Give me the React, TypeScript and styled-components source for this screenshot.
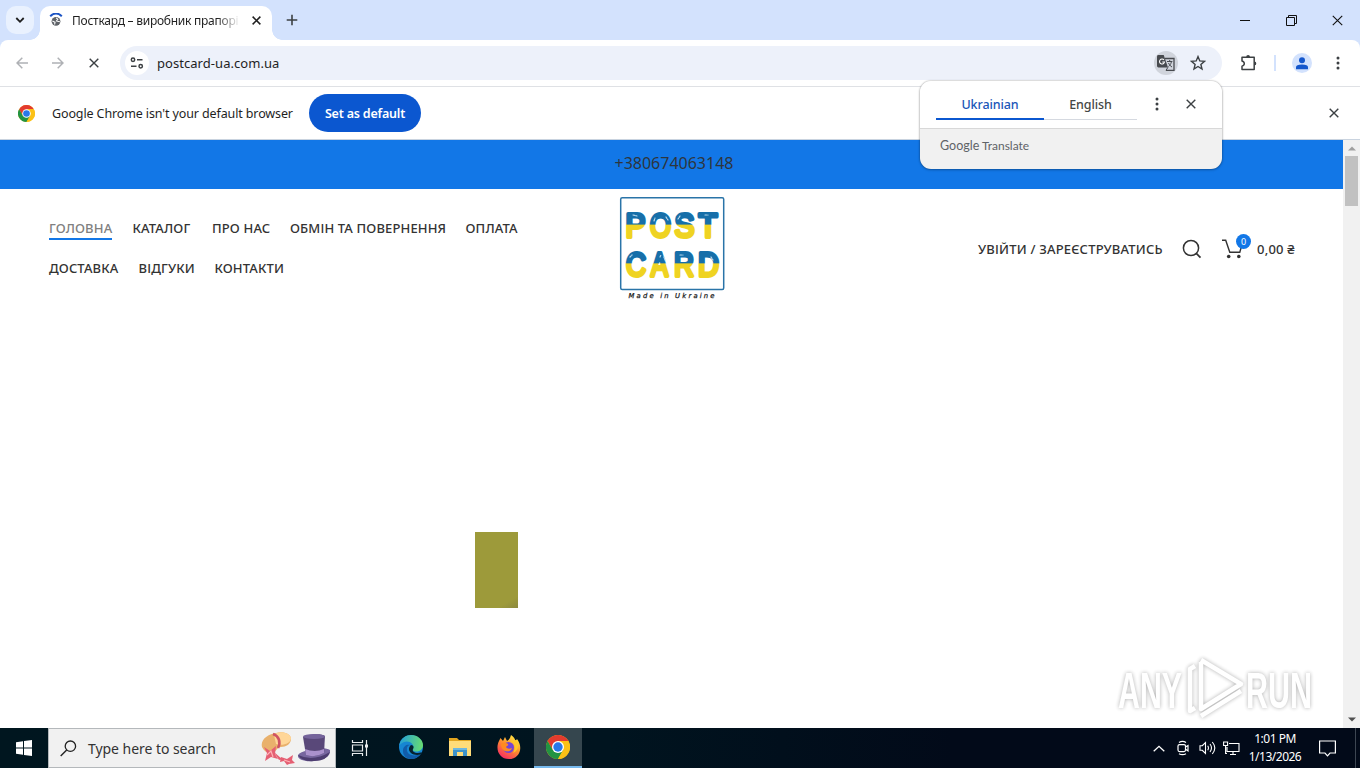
import styled, { createGlobalStyle } from 'styled-components'

const NAV_ITEMS = [
  { label: 'ГОЛОВНА', width: 63, active: true },
  { label: 'КАТАЛОГ', width: 59 },
  { label: 'ПРО НАС', width: 57.5 },
  { label: 'ОБМІН ТА ПОВЕРНЕННЯ', width: 155 },
  { label: 'ОПЛАТА', width: 54 },
  { label: 'ДОСТАВКА', width: 69 },
  { label: 'ВІДГУКИ', width: 55.5 },
  { label: 'КОНТАКТИ', width: 70 },
]

const ChromeLogo = ({ size }: { size: number }) => (
  <svg width={size} height={size} viewBox="0 0 48 48">
    <circle cx="24" cy="24" r="24" fill="#fbc116" />
    <path d="M24 12H44.8A24 24 0 0 0 3.2 12L13.6 30Z" fill="#e33b2e" />
    <path d="M3.2 12A24 24 0 0 0 24 48L34.4 30 24 34 13.6 30Z" fill="#229342" />
    <path d="M44.8 12A24 24 0 0 1 24 48L34.4 30A12 12 0 0 0 24 12Z" fill="#fbc116" />
    <circle cx="24" cy="24" r="12" fill="#fff" />
    <circle cx="24" cy="24" r="9.4" fill="#2878e8" />
  </svg>
)

const Cross = ({ size = 10, stroke = 1.4, color = '#3c4043' }) => (
  <svg width={size} height={size} viewBox="0 0 10 10">
    <path d="M.7.7 9.3 9.3M9.3.7.7 9.3" stroke={color} strokeWidth={stroke} fill="none" />
  </svg>
)

const Dots = () => (
  <svg width="4" height="14" viewBox="0 0 4 14" fill="#3c4043">
    <circle cx="2" cy="2" r="1.5" />
    <circle cx="2" cy="7" r="1.5" />
    <circle cx="2" cy="12" r="1.5" />
  </svg>
)

const Arrow = ({ flip = false }) => (
  <svg width="12" height="12" viewBox="0 0 12 12">
    <path
      d={flip ? 'M0 6h11M5.7.7 11 6l-5.3 5.3' : 'M12 6H1M6.3.7 1 6l5.3 5.3'}
      stroke="#afb1b5"
      strokeWidth="1.5"
      fill="none"
    />
  </svg>
)

const Favicon = () => (
  <svg width="14" height="15" viewBox="0 0 14 15">
    <path d="M1.2 3.3Q7-2.3 12.8 3.3" stroke="#1c54c4" strokeWidth="2" fill="none" />
    <circle cx="7" cy="8.3" r="4.4" fill="#5f6368" />
    <path d="M3.4 8 6 9.3 5.6 11.5M7.2 4.900 8.8 6.3 7.5 7.9 10.8 8.8" stroke="#fff" strokeWidth="1.1" fill="none" />
  </svg>
)

const PostcardLogo = () => (
  <svg width="106" height="106" viewBox="0 0 106 106">
    <defs>
      <linearGradient id="flagTop" gradientUnits="userSpaceOnUse" x1="0" y1="15" x2="0" y2="44">
        <stop offset=".45" stopColor="#176fa9" />
        <stop offset=".49" stopColor="#efd322" />
      </linearGradient>
      <linearGradient id="flagBottom" gradientUnits="userSpaceOnUse" x1="0" y1="54" x2="0" y2="83">
        <stop offset=".44" stopColor="#176fa9" />
        <stop offset=".48" stopColor="#efd322" />
      </linearGradient>
    </defs>
    <rect x="1.7" y="1.8" width="103" height="91.8" rx="1.5" fill="none" stroke="#2a74a8" strokeWidth="1.5" />
    <g fontFamily="Liberation Sans, Arial, sans-serif" fontSize="34" strokeWidth="3.9" strokeLinejoin="round">
      <text y="41.3" fill="url(#flagTop)" stroke="url(#flagTop)">
        <tspan x="6.5" textLength="20" lengthAdjust="spacingAndGlyphs">P</tspan>
        <tspan x="31" textLength="21" lengthAdjust="spacingAndGlyphs">O</tspan>
        <tspan x="55.5" textLength="20" lengthAdjust="spacingAndGlyphs">S</tspan>
        <tspan x="79.5" textLength="19" lengthAdjust="spacingAndGlyphs">T</tspan>
      </text>
      <text y="80" fill="url(#flagBottom)" stroke="url(#flagBottom)">
        <tspan x="7" textLength="20" lengthAdjust="spacingAndGlyphs">C</tspan>
        <tspan x="32" textLength="17" lengthAdjust="spacingAndGlyphs">A</tspan>
        <tspan x="55" textLength="20" lengthAdjust="spacingAndGlyphs">R</tspan>
        <tspan x="79" textLength="21" lengthAdjust="spacingAndGlyphs">D</tspan>
      </text>
    </g>
    <path
      d="M14 19l4 1M35 25l1-3m11-1 2 3M61 20l-2 3M86 19h3M11 61l2-2M41 61l1-2m3 2 1 3M61 59h3M92 61l2 3"
      stroke="#b9d9ec"
      strokeWidth="1.2"
      strokeDasharray="1.6 1.2"
      strokeLinecap="round"
      fill="none"
    />
    <text x="9.5" y="101.8" fontFamily="DejaVu Sans, sans-serif" fontStyle="italic" fontSize="6.8" textLength="86" fill="#222" stroke="#222" strokeWidth=".25">
      Made in Ukraine
    </text>
  </svg>
)

const Watermark = () => (
  <svg width="250" height="74" viewBox="0 0 250 74">
    <g fill="#fff" fontFamily="Liberation Sans, Arial, sans-serif" fontWeight="700" fontSize="50">
      <text x="8" y="56" textLength="64" lengthAdjust="spacingAndGlyphs">ANY</text>
      <text x="136" y="56" textLength="66" lengthAdjust="spacingAndGlyphs">RUN</text>
    </g>
    <g fill="none" stroke="#fff" strokeWidth="4.5" strokeLinejoin="round">
      <path d="M91 8 131 32 91 57V10" />
      <path d="M85 14 80 17V59L85 56M91 64 131 39" />
    </g>
  </svg>
)

const SunHat = () => (
  <svg width="34" height="34" viewBox="0 0 34 34">
    <path d="M1 16C-1 8 8 3 15 2c6-2 15 0 15 6 0 5-5 8-10 8-4 0-5 5-9 6S3 20 1 16Z" fill="#e9b16c" />
    <path d="M13 4c4-5 16-3 17 3 0 6-9 8-15 6Z" fill="#ffd698" />
    <path d="M12 3c6 2 8 8 5 14" stroke="#cf5364" strokeWidth="2.6" fill="none" />
    <path d="m3 16 6 4 6-5-1 8 3 5-7-2-6 4 2-8ZM13 21l8 7-3 1ZM20 26l6 2 6-4-1 5 3 3-6 1-2 1-3-4-4 1Z" fill="#e55f73" />
    <path d="m6 24 4-4 2 6M23 29l6 2" stroke="#ffb3b7" strokeWidth="1.2" fill="none" />
  </svg>
)

const TopHat = () => (
  <svg width="34" height="30" viewBox="0 0 34 30">
    <path d="M1 22C5 17 27 13 33 17c1 7-7 10-16 11C9 29 0 27 1 22Z" fill="#77669f" />
    <path d="M6 4C11 1 25 0 28 3L27 20Q18 25 9 22Z" fill="#594879" />
    <path d="M8 16q10 4 19 0v4q-9 5-18 2Z" fill="#aa91cc" />
    <ellipse cx="17" cy="3.5" rx="11" ry="2.4" fill="#75649b" />
    <path d="M1 22q15 7 32-3-3 9-16 9Q5 29 1 22Z" fill="#4d3d70" />
  </svg>
)

const EdgeLogo = () => (
  <svg width="24" height="24" viewBox="0 0 24 24">
    <defs>
      <linearGradient id="edgeTop" x1="0" x2="1" y1=".4" y2=".5">
        <stop stopColor="#239fd8" />
        <stop offset="1" stopColor="#68dc70" />
      </linearGradient>
    </defs>
    <circle cx="12" cy="12" r="12" fill="#1686d2" />
    <path d="M.2 10C2 3 7 0 12 0c7 0 12 5 12 10 0 4-3 6.5-6.5 6.5-3 0-4.5-1.3-3.5-3C16 9 10 5 5 7 2 8 1 10 .2 10Z" fill="url(#edgeTop)" />
    <path d="M8 13c-1 7 6 9 13.5 6.3C16 27 3 25 4 15c.4-4 4-6 7-5-2 .5-3 2-3 3Z" fill="#115ca9" />
    <path d="M12 10c3 0 3 3 2 4-1 2 1 4 5 4 2 0 4-1 4-1l-1.5 2.5C15 21 10 18 10 14c0-2 1-3 2-4Z" fill="#06222e" />
  </svg>
)

const FolderLogo = () => (
  <svg width="22" height="20" viewBox="0 0 22 20">
    <path d="M0 1h8l2 2h12v5H0Z" fill="#e2a51f" />
    <path d="M0 4h22v15H0Z" fill="#ffdc79" />
    <path d="M4 11h14v8h-4v-4H8v4H4Z" fill="#3e93c9" />
    <path d="M4 11h14v2H4Z" fill="#6db7df" />
  </svg>
)

const FirefoxLogo = () => (
  <svg width="24" height="24" viewBox="0 0 24 24">
    <defs>
      <linearGradient id="fire" x1=".8" y1="0" x2=".2" y2="1">
        <stop stopColor="#fff044" />
        <stop offset=".45" stopColor="#ff922c" />
        <stop offset="1" stopColor="#f52367" />
      </linearGradient>
    </defs>
    <path d="M2 6 3.5 3 6 6l2-4 2 4q3-1 4-6c3 2 4 4 4.5 6L20 4c7 9 2 20-8 20C2 24-2 14 2 6Z" fill="url(#fire)" />
    <circle cx="11.5" cy="12.5" r="5.5" fill="#7544d4" />
    <path d="M4 9c3-2 5-1 7 0 1 2-2 2-2 3 1 2 4 2 6 1-1 5-11 5-11-4Z" fill="#ff8a20" />
    <path d="M13 6c5 2 6 7 3 12 7-3 6-11 3-13Z" fill="#ffc629" />
  </svg>
)

const TranslateIcon = () => (
  <svg width="18" height="16" viewBox="0 0 18 16">
    <path d="M8 3.5h9v11.8H9" fill="none" stroke="#474a4f" strokeWidth="1.3" />
    <path d="M1.4 0h5.3L11 12.4H1.4Q0 12.4 0 11V1.4Q0 0 1.4 0Z" fill="#474a4f" />
    <path d="M7 5A2.5 2.5 0 1 0 7.5 7H5.3" stroke="#fff" strokeWidth="1.1" fill="none" />
    <path d="M10 6.5h5.4M12.7 5v1.5M14.5 6.5c-.7 3-2 4-3 5M11.5 8c1 2 2 3 3.5 4M9 15.3l2-3" stroke="#474a4f" fill="none" />
  </svg>
)

const App = () => (
  <Desktop>
    <GlobalStyle />
    <TabStrip>
      <TabSearch>
        <svg width="10" height="7" viewBox="0 0 10 7">
          <path d="m1.3 1 3.7 3.8L8.7 1" stroke="#1f1f1f" strokeWidth="1.8" fill="none" />
        </svg>
      </TabSearch>
      <Tab>
        <Favicon />
        <TabTitle>Посткард – виробник прапорів</TabTitle>
        <Cross size={9} stroke={1.7} color="#1f1f1f" />
      </Tab>
      <NewTab>
        <svg width="12" height="12" viewBox="0 0 12 12">
          <path d="M6 .7v10.6M.7 6h10.6" stroke="#3c4043" strokeWidth="1.6" />
        </svg>
      </NewTab>
      <WindowButtons>
        <svg width="10" height="10" viewBox="0 0 10 10">
          <path d="M0 5.5h10" stroke="#111" />
        </svg>
        <svg width="11" height="11" viewBox="0 0 11 11">
          <path d="M.5 2.5h8v8h-8ZM2.5 2.5v-2h8v8h-2" stroke="#111" fill="none" />
        </svg>
        <Cross size={11} stroke={1} color="#111" />
      </WindowButtons>
    </TabStrip>

    <ToolbarBack>
      <Toolbar>
        <NavButton><Arrow /></NavButton>
        <NavButton><Arrow flip /></NavButton>
        <NavButton><Cross size={10} /></NavButton>
        <Omnibox>
          <SiteInfo>
            <svg width="14" height="12" viewBox="0 0 14 12" fill="none" stroke="#3c4043" strokeWidth="1.5">
              <circle cx="3" cy="2.8" r="1.7" />
              <path d="M7 2.8h5.5M1 9.2h5.5" />
              <circle cx="10.7" cy="9.2" r="1.7" />
            </svg>
          </SiteInfo>
          <Url>postcard-ua.com.ua</Url>
          <TranslateButton><TranslateIcon /></TranslateButton>
          <svg width="16" height="16" viewBox="0 0 16 16">
            <path d="m8 1.6 1.8 4.3 4.7.4-3.6 3.1 1.1 4.6L8 11.5 4 14l1.1-4.6-3.6-3.1 4.7-.4Z" stroke="#3c4043" strokeWidth="1.4" fill="none" />
          </svg>
        </Omnibox>
        <ToolbarEnd>
          <svg width="18" height="18" viewBox="0 0 18 18">
            <path d="M2 3.2h12.2v12.3H2v-3.3q2.3-.6 2.3-2.6T2 7Z" stroke="#3c4043" strokeWidth="1.5" fill="none" strokeLinejoin="round" />
            <path d="M6.2 3a1.9 1.9 0 0 1 3.8 0ZM14.4 7.5a1.9 1.9 0 0 1 0 3.8Z" fill="#3c4043" />
          </svg>
          <Divider />
          <Avatar>
            <svg width="12" height="13" viewBox="0 0 12 13" fill="#1457cc">
              <circle cx="6" cy="3.2" r="3" />
              <path d="M0 12.3v-2Q0 7.6 6 7.6t6 2.7v2Z" />
            </svg>
          </Avatar>
          <Dots />
        </ToolbarEnd>
      </Toolbar>
    </ToolbarBack>

    <InfoBar>
      <ChromeLogo size={17} />
      <InfoText>Google Chrome isn't your default browser</InfoText>
      <DefaultButton>Set as default</DefaultButton>
      <InfoClose><Cross size={10} /></InfoClose>
    </InfoBar>

    <Viewport>
      <Page>
        <PhoneBar>+380674063148</PhoneBar>
        <Header>
          <Nav>
            {NAV_ITEMS.map((item) => (
              <NavLink key={item.label} $width={item.width} $active={item.active}>
                {item.label}
              </NavLink>
            ))}
          </Nav>
          <PostcardLogo />
          <Account>
            <Login>УВІЙТИ / ЗАРЕЄСТРУВАТИСЬ</Login>
            <svg width="20" height="20" viewBox="0 0 20 20">
              <circle cx="9" cy="9" r="7.6" stroke="#333" strokeWidth="1.5" fill="none" />
              <path d="m14.3 14.4 4.2 4.3" stroke="#333" strokeWidth="1.7" />
            </svg>
            <Cart>
              <svg width="20" height="20" viewBox="0 0 20 20">
                <path d="M0 1.2h3.7l4.1 12h10l1.5-5.2" stroke="#333" strokeWidth="1.4" fill="none" />
                <circle cx="6.7" cy="17.5" r="1.8" fill="#333" />
                <circle cx="16.8" cy="17.5" r="1.8" fill="#333" />
              </svg>
              <CartCount>0</CartCount>
            </Cart>
            <Total>0,00 ₴</Total>
          </Account>
        </Header>
        <Slider>
          <Swatch />
        </Slider>
      </Page>
      <Scrollbar>
        <svg width="8" height="5" viewBox="0 0 8 5"><path d="M0 4.5 4 .5l4 4Z" fill="#a0a0a0" /></svg>
        <Thumb />
        <svg width="8" height="5" viewBox="0 0 8 5"><path d="M0 .5 4 4.5l4-4Z" fill="#505050" /></svg>
      </Scrollbar>
      <WatermarkLayer><Watermark /></WatermarkLayer>
    </Viewport>

    <Taskbar>
      <TaskItem>
        <svg width="16" height="16" viewBox="0 0 16 16" fill="#fff">
          <path d="M0 2.2 7 1.2v6.3H0ZM8 1l8-1v7.5H8ZM0 8.5h7v6.3l-7-1ZM8 8.5h8V16l-8-1Z" />
        </svg>
      </TaskItem>
      <SearchBox>
        <svg width="17" height="17" viewBox="0 0 17 17">
          <circle cx="10.4" cy="6.2" r="5.2" stroke="#222" strokeWidth="1.3" fill="none" />
          <path d="M6.7 9.9.7 16" stroke="#222" strokeWidth="1.4" />
        </svg>
        <SearchText>Type here to search</SearchText>
        <Hats><SunHat /><TopHat /></Hats>
      </SearchBox>
      <TaskItem>
        <svg width="18" height="16" viewBox="0 0 18 16" fill="none" stroke="#e8ecee" strokeWidth="1.2">
          <path d="M1.5 0v2.5h10V0M1.5 5h10v6h-10ZM1.5 16v-2.5h10V16M15.5 0v16" />
          <path d="M14 6h3" strokeWidth="3" />
        </svg>
      </TaskItem>
      <Apps>
        <AppItem><EdgeLogo /></AppItem>
        <AppItem><FolderLogo /></AppItem>
        <AppItem><FirefoxLogo /></AppItem>
        <AppItem $active><ChromeLogo size={24} /></AppItem>
      </Apps>
      <Tray>
        <TraySlot>
          <svg width="12" height="7" viewBox="0 0 12 7"><path d="m.7 6.3 5.3-5 5.3 5" stroke="#fff" strokeWidth="1.3" fill="none" /></svg>
        </TraySlot>
        <TraySlot>
          <svg width="12" height="16" viewBox="0 0 12 16" fill="none" stroke="#fff" strokeWidth="1.2">
            <rect x="1" y="4.6" width="7.5" height="7" rx="1.5" />
            <path d="m8.5 7 2.5-1.5v5.3L8.5 9.2M2 2.5Q5.5.2 9 2.5M2 13.7q3.5 2 7 0" />
          </svg>
        </TraySlot>
        <TraySlot>
          <svg width="17" height="14" viewBox="0 0 17 14" fill="none" stroke="#fff" strokeWidth="1.1">
            <path d="M1 4.7h2.3L6.5 1.5v11L3.3 9.3H1ZM8.7 4.8q1.5 2.2 0 4.4M11 3q3 4 0 8M13.3 1q5 6 0 12" />
          </svg>
        </TraySlot>
        <TraySlot>
          <svg width="17" height="15" viewBox="0 0 17 15" fill="none" stroke="#fff" strokeWidth="1.1">
            <path d="M6 2.5h10v8H4V6M10 10.5v3M7 13.5h6M.6 1h4v3.5h-4ZM2.6 4.5v8H4" />
          </svg>
        </TraySlot>
        <Clock>
          <span>1:01 PM</span>
          <span>1/13/2026</span>
        </Clock>
        <svg width="17" height="17" viewBox="0 0 17 17"><path d="M.6 1h15.8v12H11l-2.500 2.8L6 13H.6Z" stroke="#fff" strokeWidth="1.2" fill="none" /></svg>
      </Tray>
    </Taskbar>

    <TranslatePopup>
      <PopupTop>
        <Language $width={108} $active>Ukrainian</Language>
        <Language $width={93}>English</Language>
        <PopupIcons><Dots /><Cross size={10} /></PopupIcons>
      </PopupTop>
      <PopupFooter><span>Google</span> Translate</PopupFooter>
    </TranslatePopup>
  </Desktop>
)

const GlobalStyle = createGlobalStyle`
  * { box-sizing: border-box; }
  body { margin: 0; overflow: hidden; background: #fff; }
  svg { display: block; flex-shrink: 0; }
`

const Desktop = styled.div`
  position: relative;
  display: flex;
  flex-direction: column;
  width: 1360px;
  height: 768px;
  overflow: hidden;
  font-family: 'Noto Sans', 'Open Sans', sans-serif;
  color: #1f1f1f;
  white-space: nowrap;
`

const TabStrip = styled.div`
  display: flex;
  height: 40px;
  padding: 6px 17px 0 6px;
  background: #d3e2fd;
`

const TabSearch = styled.div`
  display: flex;
  align-items: center;
  justify-content: center;
  width: 28px;
  height: 28px;
  border-radius: 10px;
  background: #e9f1fe;
`

const Tab = styled.div`
  position: relative;
  display: flex;
  align-items: center;
  width: 232px;
  margin-left: 6px;
  padding: 0 0 6px 9px;
  border-radius: 10px 10px 0 0;
  background: #fff;

  &::before,
  &::after {
    content: '';
    position: absolute;
    bottom: 0;
    width: 10px;
    height: 10px;
  }
  &::before {
    left: -10px;
    background: radial-gradient(circle at 0 0, transparent 9.5px, #fff 10px);
  }
  &::after {
    right: -10px;
    background: radial-gradient(circle at 100% 0, transparent 9.5px, #fff 10px);
  }
`

const TabTitle = styled.div`
  flex-shrink: 0;
  width: 167px;
  margin: 1px 12.5px 0 9px;
  overflow: hidden;
  font-size: 12px;
  letter-spacing: -0.25px;
  mask-image: linear-gradient(90deg, #000 145px, transparent 168px);
`

const NewTab = styled.div`
  display: flex;
  align-items: center;
  height: 28px;
  margin-left: 14px;
`

const WindowButtons = styled.div`
  display: flex;
  align-items: center;
  gap: 35.5px;
  height: 28px;
  margin-left: auto;
`

const ToolbarBack = styled.div`
  background: #d3e2fd;
`

const Toolbar = styled.div`
  display: flex;
  align-items: center;
  height: 47px;
  padding: 0 20px 0 4px;
  border-bottom: 1px solid #dfe1e5;
  border-radius: 8px 8px 0 0;
  background: #fff;
`

const NavButton = styled.div`
  display: flex;
  align-items: center;
  justify-content: center;
  width: 36px;
  height: 34px;
`

const Omnibox = styled.div`
  display: flex;
  align-items: center;
  width: 1102px;
  height: 34px;
  margin-left: 8px;
  padding: 0 16px 0 5px;
  border-radius: 17px;
  background: #edf1fa;
`

const SiteInfo = styled.div`
  display: flex;
  align-items: center;
  justify-content: center;
  width: 24px;
  height: 24px;
  border-radius: 12px;
  background: #fff;
`

const Url = styled.div`
  margin-left: 8px;
  font-size: 13px;
  letter-spacing: 0.05px;
`

const TranslateButton = styled.div`
  display: flex;
  align-items: center;
  justify-content: center;
  width: 24px;
  height: 24px;
  margin: 0 12px 0 auto;
  border-radius: 12px;
  background: #d0d4dc;
`

const ToolbarEnd = styled.div`
  display: flex;
  flex: 1;
  align-items: center;
  justify-content: flex-end;
`

const Divider = styled.div`
  width: 2px;
  height: 16px;
  margin: 0 16px 0 16px;
  background: #d3e2fd;
`

const Avatar = styled.div`
  display: flex;
  align-items: center;
  justify-content: center;
  width: 20px;
  height: 20px;
  margin-right: 24px;
  border-radius: 10px;
  background: #d3e2fd;
`

const InfoBar = styled.div`
  display: flex;
  align-items: center;
  height: 53px;
  padding: 0 21px 0 18px;
  border-bottom: 1px solid #c9d3df;
`

const InfoText = styled.div`
  width: 241px;
  margin: 0 16px 0 17px;
  font-size: 12.5px;
  letter-spacing: -0.12px;
`

const DefaultButton = styled.div`
  width: 112px;
  height: 38px;
  border-radius: 19px;
  background: #0b57d0;
  color: #fff;
  font-size: 12.5px;
  font-weight: 600;
  letter-spacing: -0.2px;
  line-height: 39px;
  text-align: center;
`

const InfoClose = styled.div`
  margin-left: auto;
`

const Viewport = styled.div`
  position: relative;
  display: flex;
  height: 588px;
`

const Page = styled.main`
  width: 1343px;
`

const PhoneBar = styled.div`
  height: 49px;
  padding-left: 5px;
  background: #1277e7;
  color: #2e353d;
  font-size: 16px;
  line-height: 46px;
  text-align: center;
`

const Header = styled.header`
  display: flex;
  align-items: center;
  height: 120px;
  padding: 0 48px 0 49px;
  color: #333;
  font-size: 13px;
  font-weight: 500;
`

const Nav = styled.nav`
  display: flex;
  flex-wrap: wrap;
  gap: 16px 20.5px;
  width: 500px;
  margin: 0 70px 2px 0;
`

const NavLink = styled.a<{ $width: number; $active?: boolean }>`
  width: ${(props) => props.$width}px;
  height: 24px;
  border-bottom: 2px solid ${(props) => (props.$active ? '#1277e7' : 'transparent')};
  color: ${(props) => (props.$active ? '#808080' : '#333')};
  letter-spacing: 0.14px;
  line-height: 24px;
`

const Account = styled.div`
  display: flex;
  flex: 1;
  align-items: center;
  justify-content: flex-end;
`

const Login = styled.div`
  width: 185px;
  margin-right: 19px;
  letter-spacing: 0.2px;
`

const Cart = styled.div`
  position: relative;
  margin: 0 15px 0 20px;
`

const CartCount = styled.div`
  position: absolute;
  top: -5px;
  right: -9px;
  width: 15px;
  height: 15px;
  border-radius: 50%;
  background: #1277e7;
  color: #fff;
  font-size: 9px;
  font-weight: 400;
  line-height: 15px;
  text-align: center;
`

const Total = styled.div`
  width: 38px;
  letter-spacing: 0.2px;
`

const Slider = styled.section`
  padding: 223px 0 0 475px;
`

const Swatch = styled.div`
  width: 43px;
  height: 76px;
  background: linear-gradient(150deg, #9d9a3a 88%, #8c8940);
`

const Scrollbar = styled.div`
  display: flex;
  flex-direction: column;
  align-items: center;
  width: 17px;
  padding: 6px 0;
  background: #f1f1f1;
`

const Thumb = styled.div`
  width: 13px;
  height: 50px;
  margin: 5px 0 auto;
  background: #c1c1c1;
`

const WatermarkLayer = styled.div`
  position: absolute;
  right: 0;
  bottom: 2px;
  opacity: 0.9;
  filter: drop-shadow(0 0 2px rgba(0, 0, 0, 0.35));
`

const Taskbar = styled.footer`
  display: flex;
  height: 40px;
  background: linear-gradient(90deg, #00161f 0%, #00141f 45%, #020a19 70%);
`

const TaskItem = styled.div`
  display: flex;
  align-items: center;
  justify-content: center;
  width: 48px;
`

const Apps = styled.div`
  display: flex;
  gap: 1px;
  margin-left: 3px;
`

const AppItem = styled.div<{ $active?: boolean }>`
  display: flex;
  align-items: center;
  justify-content: center;
  width: 48px;
  border-bottom: 2px solid ${(props) => (props.$active ? '#76b9ed' : 'transparent')};
  background: ${(props) => (props.$active ? '#35464e' : 'transparent')};
`

const SearchBox = styled.div`
  display: flex;
  align-items: center;
  width: 288px;
  padding: 0 4px 0 11px;
  border: 1px solid #b4b8bb;
  background: #f1f1f1;
`

const SearchText = styled.div`
  margin-left: 11px;
  color: #333;
  font-size: 14px;
  letter-spacing: -0.05px;
`

const Hats = styled.div`
  display: flex;
  align-items: center;
  gap: 2px;
  margin-left: auto;
`

const Tray = styled.div`
  display: flex;
  align-items: center;
  margin-left: auto;
  margin-right: 4px;
  padding-right: 19px;
  border-right: 1px solid #3d4652;
`

const TraySlot = styled.div`
  display: flex;
  align-items: center;
  justify-content: center;
  width: 24px;
`

const Clock = styled.div`
  display: flex;
  flex-direction: column;
  width: 56px;
  margin: 0 16px 0 4px;
  color: #fff;
  font-size: 12px;
  letter-spacing: -0.5px;
  line-height: 18px;
  text-align: center;
`

const TranslatePopup = styled.div`
  position: absolute;
  top: 81px;
  left: 920px;
  width: 302px;
  height: 88px;
  overflow: hidden;
  border-radius: 11px;
  background: #f1f1f1;
  box-shadow: 0 0 2px rgba(0, 0, 0, 0.4), 0 1px 3px rgba(0, 0, 0, 0.2);
`

const PopupTop = styled.div`
  display: flex;
  height: 48px;
  padding: 8px 16px 0;
  border-bottom: 1px solid #d8d8d8;
  background: #fff;
`

const Language = styled.div<{ $width: number; $active?: boolean }>`
  width: ${(props) => props.$width}px;
  height: 31px;
  border-bottom: ${(props) => (props.$active ? '2px solid #0b57d0' : '1px solid #d5d9e0')};
  color: ${(props) => (props.$active ? '#1a56b8' : '#444746')};
  font-size: 12.5px;
  font-weight: 500;
  letter-spacing: -0.1px;
  line-height: 31px;
  text-align: center;
`

const PopupIcons = styled.div`
  display: flex;
  align-items: center;
  gap: 27px;
  height: 30px;
  margin-left: 18px;
`

const PopupFooter = styled.div`
  padding: 9px 20px;
  color: #5f6368;
  font-family: Lato, sans-serif;
  font-size: 12px;

  span {
    font-size: 12.5px;
  }
`

export default App
